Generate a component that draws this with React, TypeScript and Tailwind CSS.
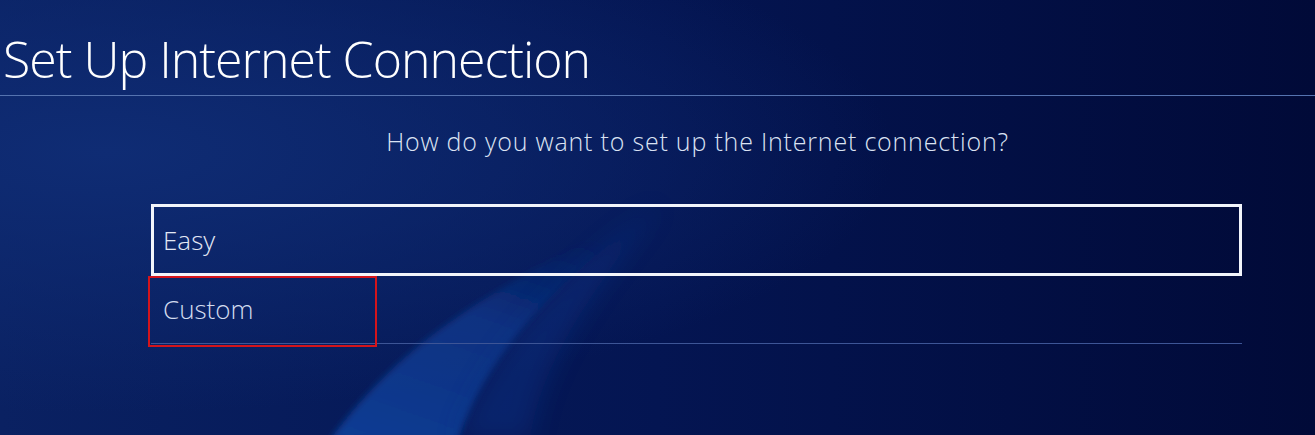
const Wave = () => (
  <svg
    className="absolute inset-0 h-full w-full"
    viewBox="0 0 1315 435"
    preserveAspectRatio="none"
  >
    <defs>
      <linearGradient id="arc" x1="0" y1="1" x2="0.5" y2="0">
        <stop offset="0" stopColor="#0f3f98" stopOpacity="0.95" />
        <stop offset="0.6" stopColor="#0e3a90" stopOpacity="0.7" />
        <stop offset="1" stopColor="#0b2f7c" stopOpacity="0" />
      </linearGradient>
      <radialGradient id="glow" cx="0.08" cy="0.35" r="0.6">
        <stop offset="0" stopColor="#0f2c74" />
        <stop offset="1" stopColor="#0f2c74" stopOpacity="0" />
      </radialGradient>
      <filter id="soft" x="-20%" y="-20%" width="140%" height="140%">
        <feGaussianBlur stdDeviation="3" />
      </filter>
      <filter id="softer" x="-20%" y="-20%" width="140%" height="140%">
        <feGaussianBlur stdDeviation="12" />
      </filter>
    </defs>
    <rect width="1315" height="435" fill="url(#glow)" />
    <path
      d="M330 440 C 400 345, 480 292, 660 205 C 570 270, 490 345, 458 440 Z"
      fill="url(#arc)"
      filter="url(#soft)"
    />
    <path
      d="M458 440 C 490 345, 570 270, 660 205 C 600 280, 540 360, 530 440 Z"
      fill="#0b3286"
      opacity="0.45"
      filter="url(#softer)"
    />
  </svg>
);

export default function App() {
  return (
    <div
      className="relative h-[435px] w-[1315px] overflow-hidden bg-gradient-to-r from-[#0a2162] via-[#041552] to-[#010a38] text-white"
      style={{ fontFamily: '"Open Sans", "Noto Sans", sans-serif' }}
    >
      <Wave />
      <div className="relative flex flex-col">
        <div className="flex h-[96px] items-end border-b border-[#5573b0] pb-[2px] pl-[3px]">
          <h1 className="text-[50px] leading-[68px] font-light tracking-[-1px]">
            Set Up Internet Connection
          </h1>
        </div>
        <p className="mt-[28px] pl-[80px] text-center text-[25px] leading-[34px] font-light tracking-[0.8px] text-[#dbe3f3]">
          How do you want to set up the Internet connection?
        </p>
        <div className="mt-[46px] ml-[151px] flex w-[1091px] flex-col">
          <div className="flex h-[72px] items-center border-[3px] border-[#f2f5fb] pl-[9px] text-[26px] font-light text-[#e3e9f5]">
            Easy
          </div>
          <div className="relative flex h-[68px] items-center border-b border-[#3d5596] pl-[12px] text-[26px] font-light text-[#d3dcef]">
            Custom
            <div className="absolute top-0 left-[-3px] h-[71px] w-[229px] border-2 border-[#d4141b]" />
          </div>
        </div>
      </div>
    </div>
  );
}
